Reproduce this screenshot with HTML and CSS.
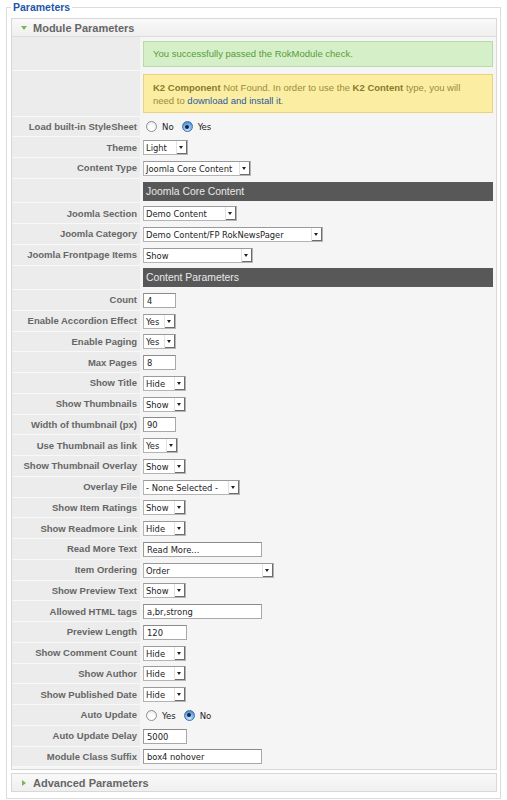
FILE: index.html
```html
<!DOCTYPE html>
<html>
<head>
<meta charset="utf-8">
<link rel="stylesheet" href="styles.css">
</head>
<body>
<fieldset class="params">
  <legend>Parameters</legend>
  <div class="panel">
    <div class="panel-head"><span class="tri-down"></span>Module Parameters</div>
    <div class="panel-body">
      <div class="row row-ok"><div class="lbl"></div><div class="val"><div class="msg ok">You successfully passed the RokModule check.</div></div></div>
      <div class="row row-warn"><div class="lbl"></div><div class="val"><div class="msg warn"><b>K2 Component</b> Not Found. In order to use the <b>K2 Content</b> type, you will<br>need to <a href="#">download and install it</a>.</div></div></div>
      <div class="row"><div class="lbl">Load built-in StyleSheet</div><div class="val"><span class="radio"></span><span class="rl">No</span><span class="radio on"></span><span class="rl">Yes</span></div></div>
      <div class="row"><div class="lbl">Theme</div><div class="val"><span class="sel w45"><span class="st">Light</span><span class="arr"></span></span></div></div>
      <div class="row"><div class="lbl">Content Type</div><div class="val"><span class="sel w108"><span class="st">Joomla Core Content</span><span class="arr"></span></span></div></div>
      <div class="row row-head"><div class="lbl"></div><div class="val"><div class="bar">Joomla Core Content</div></div></div>
      <div class="row"><div class="lbl">Joomla Section</div><div class="val"><span class="sel w94"><span class="st">Demo Content</span><span class="arr"></span></span></div></div>
      <div class="row"><div class="lbl">Joomla Category</div><div class="val"><span class="sel w180"><span class="st">Demo Content/FP RokNewsPager</span><span class="arr"></span></span></div></div>
      <div class="row"><div class="lbl">Joomla Frontpage Items</div><div class="val"><span class="sel w110"><span class="st">Show</span><span class="arr"></span></span></div></div>
      <div class="row row-head"><div class="lbl"></div><div class="val"><div class="bar">Content Parameters</div></div></div>
      <div class="row"><div class="lbl">Count</div><div class="val"><span class="inp w33">4</span></div></div>
      <div class="row"><div class="lbl">Enable Accordion Effect</div><div class="val"><span class="sel w33"><span class="st">Yes</span><span class="arr"></span></span></div></div>
      <div class="row"><div class="lbl">Enable Paging</div><div class="val"><span class="sel w33"><span class="st">Yes</span><span class="arr"></span></span></div></div>
      <div class="row"><div class="lbl">Max Pages</div><div class="val"><span class="inp w33">8</span></div></div>
      <div class="row"><div class="lbl">Show Title</div><div class="val"><span class="sel w43"><span class="st">Hide</span><span class="arr"></span></span></div></div>
      <div class="row"><div class="lbl">Show Thumbnails</div><div class="val"><span class="sel w43"><span class="st">Show</span><span class="arr"></span></span></div></div>
      <div class="row"><div class="lbl">Width of thumbnail (px)</div><div class="val"><span class="inp w33">90</span></div></div>
      <div class="row"><div class="lbl">Use Thumbnail as link</div><div class="val"><span class="sel w35"><span class="st">Yes</span><span class="arr"></span></span></div></div>
      <div class="row"><div class="lbl">Show Thumbnail Overlay</div><div class="val"><span class="sel w43"><span class="st">Show</span><span class="arr"></span></span></div></div>
      <div class="row"><div class="lbl">Overlay File</div><div class="val"><span class="sel w97"><span class="st">- None Selected -</span><span class="arr"></span></span></div></div>
      <div class="row"><div class="lbl">Show Item Ratings</div><div class="val"><span class="sel w43"><span class="st">Show</span><span class="arr"></span></span></div></div>
      <div class="row"><div class="lbl">Show Readmore Link</div><div class="val"><span class="sel w43"><span class="st">Hide</span><span class="arr"></span></span></div></div>
      <div class="row"><div class="lbl">Read More Text</div><div class="val"><span class="inp w119">Read More...</span></div></div>
      <div class="row"><div class="lbl">Item Ordering</div><div class="val"><span class="sel w131"><span class="st">Order</span><span class="arr"></span></span></div></div>
      <div class="row"><div class="lbl">Show Preview Text</div><div class="val"><span class="sel w43"><span class="st">Show</span><span class="arr"></span></span></div></div>
      <div class="row"><div class="lbl">Allowed HTML tags</div><div class="val"><span class="inp w119">a,br,strong</span></div></div>
      <div class="row"><div class="lbl">Preview Length</div><div class="val"><span class="inp w44">120</span></div></div>
      <div class="row"><div class="lbl">Show Comment Count</div><div class="val"><span class="sel w43"><span class="st">Hide</span><span class="arr"></span></span></div></div>
      <div class="row"><div class="lbl">Show Author</div><div class="val"><span class="sel w43"><span class="st">Hide</span><span class="arr"></span></span></div></div>
      <div class="row"><div class="lbl">Show Published Date</div><div class="val"><span class="sel w43"><span class="st">Hide</span><span class="arr"></span></span></div></div>
      <div class="row"><div class="lbl">Auto Update</div><div class="val"><span class="radio"></span><span class="rl">Yes</span><span class="radio on"></span><span class="rl">No</span></div></div>
      <div class="row"><div class="lbl">Auto Update Delay</div><div class="val"><span class="inp w44">5000</span></div></div>
      <div class="row"><div class="lbl">Module Class Suffix</div><div class="val"><span class="inp w119">box4 nohover</span></div></div>
    </div>
  </div>
  <div class="panel adv">
    <div class="panel-head"><span class="tri-right"></span>Advanced Parameters</div>
  </div>
</fieldset>
</body>
</html>
```

FILE: styles.css
```css
html, body {
  margin: 0;
  padding: 0;
  background: #fff;
}
body {
  font-family: "Liberation Sans", Arial, sans-serif;
  font-size: 9.5px;
  color: #333;
}
.params {
  margin: 1px 6px 0 6px;
  padding: 4px 3px 6px 4px;
  border: 1px solid #dcdcdc;
}
.params legend {
  padding: 0 2px;
  font-size: 10.5px;
  font-weight: bold;
  color: #1f56a8;
  line-height: 13px;
}
.panel {
  border: 1px solid #d8d8d8;
  background: #f5f5f5;
}
.panel-head {
  height: 17px;
  border-bottom: 1px solid #dcdcdc;
  background: linear-gradient(#f9f9f9, #efefef);
  display: flex;
  align-items: center;
  font-size: 11px;
  font-weight: bold;
  color: #666;
  padding-left: 9px;
}
.tri-down {
  width: 0;
  height: 0;
  border-left: 3px solid transparent;
  border-right: 3px solid transparent;
  border-top: 4px solid #74b85a;
  margin-right: 6px;
}
.tri-right {
  width: 0;
  height: 0;
  border-top: 3px solid transparent;
  border-bottom: 3px solid transparent;
  border-left: 4px solid #74b85a;
  margin-right: 7px;
  margin-left: 1px;
}
.adv {
  margin-top: 3px;
}
.adv .panel-head {
  border-bottom: none;
}
.panel-body {
  padding-bottom: 2px;
}
.row {
  display: grid;
  grid-template-columns: 128px 1fr;
  height: 20.75px;
}
.lbl {
  background: #ececec;
  border-bottom: 1px solid #f8f8f8;
  display: flex;
  align-items: center;
  justify-content: flex-end;
  padding-right: 3px;
  font-weight: bold;
  color: #666;
  white-space: nowrap;
}
.val {
  display: flex;
  align-items: center;
  padding: 0 3px 0 3px;
  min-width: 0;
}
.row-ok { height: 33.5px; }
.row-warn { height: 46px; }
.row-head { height: 24.5px; }
.msg {
  flex: 1;
  box-sizing: border-box;
  padding-left: 9px;
  font-size: 9.5px;
}
.ok {
  height: 26px;
  display: flex;
  align-items: center;
  background: #d5efc9;
  border: 1px solid #b7dca8;
  color: #5a9a3a;
}
.warn {
  height: 39px;
  padding-top: 6px;
  line-height: 13px;
  background: #fbeea2;
  border: 1px solid #e9d27a;
  color: #9b8b3b;
}
.warn b {
  color: #8a7a2a;
}
.warn a {
  color: #2a5b9e;
  text-decoration: none;
}
.bar {
  flex: 1;
  height: 19px;
  background: #585858;
  color: #e8e8e8;
  font-size: 10.4px;
  display: flex;
  align-items: center;
  padding-left: 3px;
}
.sel, .inp {
  box-sizing: border-box;
  height: 15px;
  background: #fff;
  border: 1px solid #b4b4b4;
  border-top-color: #9a9a9a;
  font-family: "DejaVu Sans Condensed", "DejaVu Sans", sans-serif;
  font-stretch: condensed;
  font-size: 9.3px;
  color: #222;
  display: inline-flex;
  align-items: center;
  white-space: nowrap;
}
.sel .st {
  flex: 1;
  padding-left: 2px;
  overflow: hidden;
}
.sel .arr {
  position: relative;
  width: 11px;
  height: 100%;
  box-sizing: border-box;
  border-left: 1px solid #e2e2e2;
  box-shadow: inset -1px -1px 0 #6c6c6c;
}
.sel .arr::after {
  content: "";
  position: absolute;
  left: 2px;
  top: 5px;
  border-left: 2.5px solid transparent;
  border-right: 2.5px solid transparent;
  border-top: 3px solid #222;
}
.inp {
  padding-left: 3px;
  border-color: #a8a8a8;
  border-top-color: #8a8a8a;
  border-left-color: #9a9a9a;
}
.w33 { width: 33px; }
.w35 { width: 35px; }
.w43 { width: 43px; }
.w44 { width: 44px; }
.w45 { width: 45px; }
.w94 { width: 94px; }
.w97 { width: 97px; }
.w108 { width: 108px; }
.w110 { width: 110px; }
.w119 { width: 119px; }
.w131 { width: 131px; }
.w180 { width: 180px; }
.radio {
  box-sizing: border-box;
  width: 11px;
  height: 11px;
  border-radius: 50%;
  border: 1px solid #8e8e8e;
  background: radial-gradient(circle at 50% 70%, #ffffff 30%, #e2e2e2 100%);
  margin-left: 3px;
  margin-right: 5px;
  display: inline-flex;
  align-items: center;
  justify-content: center;
}
.radio.on {
  border-color: #3f70a8;
  background: radial-gradient(circle at 50% 80%, #bfe0ff 10%, #5c9be0 70%, #3b78c4 100%);
}
.radio.on::after {
  content: "";
  width: 4px;
  height: 4px;
  border-radius: 50%;
  background: #17253a;
}
.rl {
  font-family: "DejaVu Sans Condensed", "DejaVu Sans", sans-serif;
  font-stretch: condensed;
  font-size: 9.5px;
  color: #222;
  margin-right: 5px;
}
```
